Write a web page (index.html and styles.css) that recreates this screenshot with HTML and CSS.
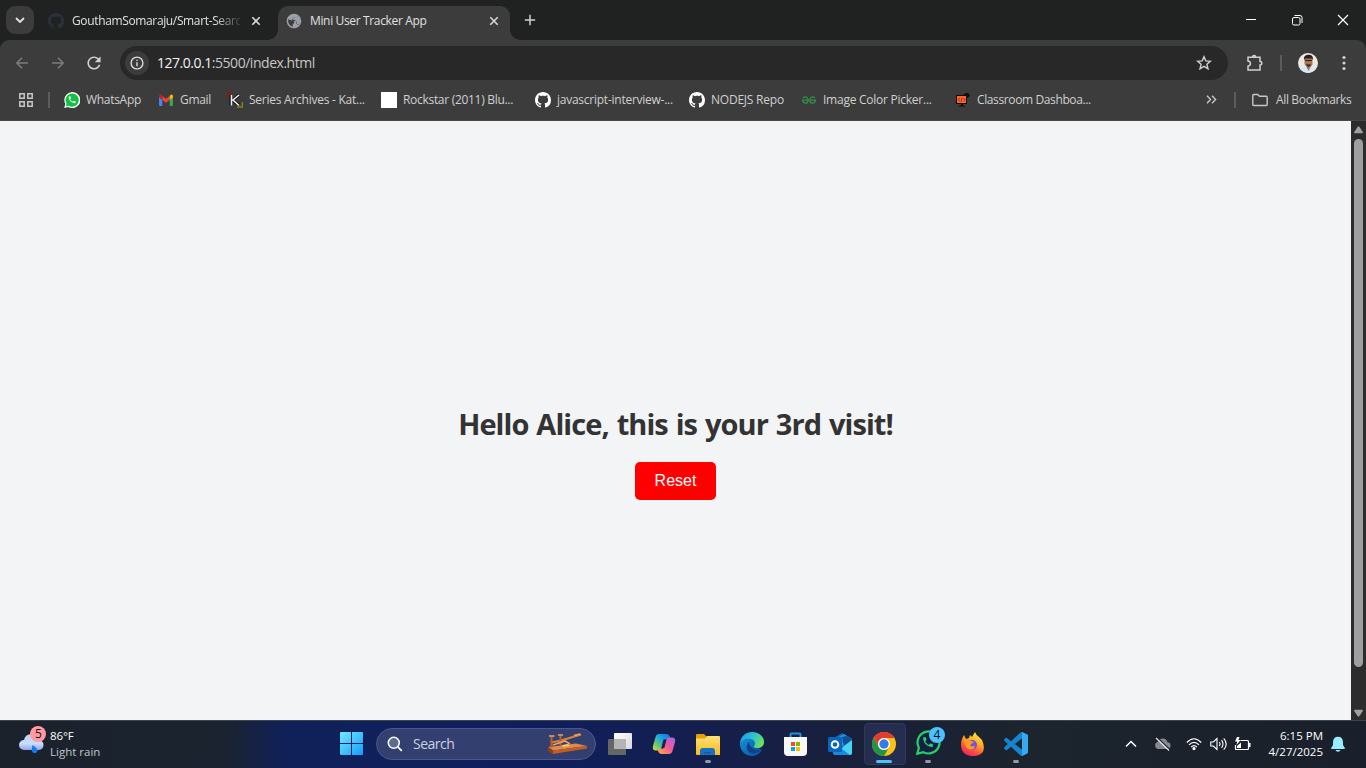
FILE: index.html
```html
<!DOCTYPE html>
<html lang="en">
<head>
<meta charset="utf-8">
<title>Mini User Tracker App</title>
<link rel="stylesheet" href="styles.css">
</head>
<body>
<svg class="defs" width="0" height="0">
  <symbol id="github" viewBox="0 0 16 16"><path fill="currentColor" d="M8 0C3.58 0 0 3.58 0 8c0 3.54 2.29 6.53 5.47 7.59.4.07.55-.17.55-.38 0-.19-.01-.82-.01-1.49-2.01.37-2.53-.49-2.69-.94-.09-.23-.48-.94-.82-1.13-.28-.15-.68-.52-.01-.53.63-.01 1.08.58 1.23.82.72 1.21 1.87.87 2.33.66.07-.52.28-.87.51-1.07-1.78-.2-3.64-.89-3.64-3.95 0-.87.31-1.59.82-2.15-.08-.2-.36-1.02.08-2.12 0 0 .67-.21 2.2.82.64-.18 1.32-.27 2-.27s1.36.09 2 .27c1.53-1.04 2.2-.82 2.2-.82.44 1.1.16 1.92.08 2.12.51.56.82 1.27.82 2.15 0 3.07-1.87 3.75-3.65 3.95.29.25.54.73.54 1.48 0 1.07-.01 1.93-.01 2.2 0 .21.15.46.55.38A8.01 8.01 0 0 0 16 8c0-4.42-3.58-8-8-8z"/></symbol>
  <symbol id="handset" viewBox="0 0 24 24"><path fill="currentColor" d="M6.62 10.79c1.44 2.83 3.76 5.14 6.59 6.59l2.2-2.2c.27-.27.67-.36 1.02-.24 1.12.37 2.33.57 3.57.57.55 0 1 .45 1 1V20c0 .55-.45 1-1 1-9.39 0-17-7.61-17-17 0-.55.45-1 1-1h3.5c.55 0 1 .45 1 1 0 1.25.2 2.45.57 3.57.11.35.03.74-.25 1.02l-2.2 2.2z"/></symbol>
  <symbol id="cross" viewBox="0 0 10 10"><path d="M1.3 1.3l7.400 7.400M8.700 1.300L1.300 8.700" fill="none" stroke="currentColor" stroke-width="1.600"/></symbol>
</svg>

<header class="tabstrip">
  <div class="tab-search"><svg width="10" height="6" viewBox="0 0 10 6"><path d="M1 1l4 4 4-4" fill="none" stroke="#e3e3e3" stroke-width="1.800"/></svg></div>
  <div class="tab tab-idle">
    <svg class="fav dim" width="16" height="16"><use href="#github"/></svg>
    <span class="tab-title fade">GouthamSomaraju/Smart-Searc</span>
    <svg class="close" width="10" height="10"><use href="#cross"/></svg>
  </div>
  <div class="tab tab-active">
    <svg class="fav" width="16" height="16" viewBox="1 1 22 22"><path fill="#9aa0a6" d="M12 2C6.480 2 2 6.480 2 12s4.480 10 10 10 10-4.480 10-10S17.520 2 12 2zm-1 17.930c-3.950-.49-7-3.850-7-7.930 0-.62.080-1.210.210-1.790L9 11.500q3 0 3.500 1.500v2q-2 .5-2 2zm6.900-2.540c-.26-.81-1-1.390-1.900-1.390h-1v-3c0-.55-.45-1-1-1H9.500V9h2c.55 0 1-.45 1-1V6.500h1c1.100 0 1.500-.9 1.500-2v-.0c2.930 1.190 5 4.060 5 7.410 0 2.080-.8 3.970-2.100 5.390z" transform="rotate(4 12 12)"/><path fill="#9aa0a6" d="M14 4l5 3 1.500 5-1.500 4.500-3.500-.5v-3L13.500 11 11 10.500V9l2.500-1.500z"/></svg>
    <span class="tab-title t-mini">Mini User Tracker App</span>
    <svg class="close" width="10" height="10"><use href="#cross"/></svg>
  </div>
  <svg class="new-tab" width="12" height="12" viewBox="0 0 12 12"><path d="M6 .8v10.400M.8 6h10.400" stroke="#d0d0d0" stroke-width="1.500"/></svg>
  <div class="window-controls">
    <svg width="12" height="12" viewBox="0 0 12 12"><path d="M1 5.500h10" stroke="#fff"/></svg>
    <svg width="12" height="12" viewBox="0 0 12 12" fill="none" stroke="#fff"><rect x="1.500" y="3.500" width="7.500" height="7.500" rx="1.500"/><path d="M3.500 1.500h5.500a2 2 0 0 1 2 2v5.500"/></svg>
    <svg width="12" height="12" viewBox="0 0 12 12"><path d="M1 1l10 10M11 1L1 11" stroke="#fff" stroke-width="1.200"/></svg>
  </div>
</header>

<div class="toolbar">
  <svg class="back" width="12" height="12" viewBox="0 0 12 12"><path d="M12 6H1M6 .8L.9 6 6 11.200" fill="none" stroke="#7c7c7c" stroke-width="1.500"/></svg>
  <svg class="forward" width="12" height="12" viewBox="0 0 12 12"><path d="M0 6h11M6 .8L11.100 6 6 11.200" fill="none" stroke="#7c7c7c" stroke-width="1.500"/></svg>
  <svg class="reload" width="14" height="14" viewBox="3.500 3.500 17 17"><path fill="#d0d0d0" d="M17.650 6.350C16.200 4.900 14.210 4 12 4c-4.420 0-7.990 3.580-7.990 8s3.570 8 7.990 8c3.730 0 6.840-2.550 7.730-6h-2.080c-.82 2.330-3.040 4-5.650 4-3.310 0-6-2.690-6-6s2.690-6 6-6c1.660 0 3.140.69 4.220 1.780L13 11h7V4l-2.350 2.350z"/></svg>
  <div class="omnibox">
    <div class="site-info"><svg width="14" height="14" viewBox="0 0 14 14"><circle cx="7" cy="7" r="5.900" fill="none" stroke="#dcdcdc" stroke-width="1.400"/><path d="M7 6.200v4M7 3.700v1.400" stroke="#dcdcdc" stroke-width="1.400"/></svg></div>
    <span class="url"><b>127.0.0.1</b>:5500/index.html</span>
    <svg class="star" width="16" height="16" viewBox="0 0 16 16"><path d="M8 1.700l1.800 4.200 4.600.4-3.500 3 1.100 4.500L8 11.400l-4 2.400 1.100-4.500-3.500-3 4.600-.4z" fill="none" stroke="#d0d0d0" stroke-width="1.400"/></svg>
  </div>
  <svg class="puzzle" width="18" height="18" viewBox="0 0 18 18"><path d="M2 3.200h12v4.300q1.800 0 1.800 1.700t-1.800 1.700V16H2v-3.800q2.400-.4 2.400-2.600T2 7zM6.600 3q0-1.600 1.500-1.600T9.600 3" fill="none" stroke="#d0d0d0" stroke-width="1.500"/></svg>
  <i class="divider d-profile"></i>
  <svg class="avatar" width="20" height="20" viewBox="0 0 20 20"><defs><clipPath id="av"><circle cx="10" cy="10" r="10"/></clipPath></defs><g clip-path="url(#av)"><path fill="#ebe9e6" d="M0 0h20v20H0z"/><path fill="#d7e9f3" d="M1 20q0-5 6-7l3 2 4-2q5 2 5 7z"/><path fill="#a87356" d="M6.500 5h8v6.500l-2 2.500-2 4-2-4-2-3z"/><path fill="#28211e" d="M6 7q-.7-5 4-5.200 5.500-.3 5 5.200l-1-1.600H7zM8.300 11h4.500q-.3 2.800-2.200 2.800T8.300 11z"/><path fill="#9b674d" d="M9.400 11.300h2.400v.7H9.400z"/><path d="M7 7.500h7" stroke="#32221e"/></g></svg>
  <svg class="kebab" width="4" height="16" viewBox="0 0 4 16" fill="#d0d0d0"><circle cx="2" cy="2.500" r="1.600"/><circle cx="2" cy="8" r="1.600"/><circle cx="2" cy="13.500" r="1.600"/></svg>
</div>

<nav class="bookmarks">
  <svg class="apps" width="14" height="14" viewBox="0 0 14 14" fill="none" stroke="#c7c7c7" stroke-width="1.500"><path d="M.8.8h4.400v4.400H.8zM8.800.8h4.400v4.400H8.800zM.8 8.800h4.400v4.400H.8zM8.800 8.800h4.400v4.400H8.800z"/></svg>
  <i class="divider d-apps"></i>
  <a class="bm w94"><svg width="16" height="16" viewBox="0 0 16 16"><path fill="#fff" d="M.2 16l1.100-4.100A8 8 0 1 1 4.300 15z"/><path fill="#12c143" d="M1.800 14.500l.8-2.800a6.600 6.600 0 1 1 2.200 2.100z"/><use href="#handset" x="3.600" y="3.300" width="9" height="9" color="#fff"/></svg><span class="t-wa">WhatsApp</span></a>
  <a class="bm w69"><svg width="16" height="16" viewBox="0 0 16 16"><path fill="#4285f4" d="M1 5l3.300 2.500V14H2q-1 0-1-1z"/><path fill="#34a853" d="M11.700 7.500L15 5v8q0 1-1 1h-2.300z"/><path fill="#ea4335" d="M4.300 4L8 6.800 11.700 4v4L8 10.800 4.300 8z"/><path fill="#c5221f" d="M1 4.300q0-1.800 1.500-1.700Q3.500 2.700 4.300 4v4L1 5.400z"/><path fill="#fbbc04" d="M15 4.300q0-1.800-1.500-1.700-1 .1-1.800 1.400v4L15 5.400z"/></svg><span class="t-gm">Gmail</span></a>
  <a class="bm w154"><svg width="16" height="16" viewBox="0 0 16 16" fill="none"><path d="M1 6V1h5" stroke="#9c1010" stroke-width="1.300"/><path d="M15.300 10v5H10" stroke="#8a8514" stroke-width="1.300"/><path d="M4 3v10.500M12 3L5.500 8.500 12.500 13" stroke="#111" stroke-width="3"/><path d="M4.500 3v10.500M12 3L6 8l6 5.500" stroke="#eee" stroke-width="1.600"/></svg><span class="t-se">Series Archives - Kat...</span></a>
  <a class="bm w154"><svg width="16" height="16"><rect width="16" height="16" fill="#fff"/></svg><span class="t-ro">Rockstar (2011) Blu...</span></a>
  <a class="bm w154"><svg width="16" height="16" color="#fff"><use href="#github"/></svg><span class="t-js">javascript-interview-...</span></a>
  <a class="bm w112"><svg width="16" height="16" color="#fff"><use href="#github"/></svg><span class="t-no">NODEJS Repo</span></a>
  <a class="bm w154"><svg width="16" height="16" viewBox="0 0 16 16" fill="none" stroke="#2f8d46" stroke-width="1.300"><path d="M1 8.200h14M2 5.800q1.500-1.200 3.500-.6 1.600.8 1.600 3 0 3-2.500 3T1.600 8.200M14 5.800q-1.500-1.200-3.500-.6-1.600.8-1.600 3 0 3 2.500 3t3-3"/></svg><span class="t-im">Image Color Picker...</span></a>
  <a class="bm"><svg width="16" height="16" viewBox="0 0 16 16"><path fill="#101010" d="M1 3h7q2-2.500 5-2l2 2-1 2-2 1v6H8v1.500h2v1H4v-1h2V12H1z"/><path fill="#ff6230" d="M2 4h9v7H2z"/><path d="M4.800 6L3.200 7.700l1.600 1.700M8.300 6l1.600 1.700-1.600 1.700M7 5.700L6 9.800" stroke="#7c2c10" stroke-width=".8" fill="none"/></svg><span class="t-cl">Classroom Dashboa...</span></a>
  <div class="bm-right">
    <svg class="more" width="11" height="9" viewBox="0 0 11 9"><path d="M1 .8l3.600 3.700L1 8.200M6 .8l3.600 3.700L6 8.200" fill="none" stroke="#c7c7c7" stroke-width="1.400"/></svg>
    <i class="divider"></i>
    <svg class="folder" width="16" height="14" viewBox="0 0 16 14"><path d="M.8 11.500v-9q0-1 1-1h4l1.700 1.700h6.700q1 0 1 1v7.300q0 1-1 1H1.800q-1 0-1-1z" fill="none" stroke="#c7c7c7" stroke-width="1.400"/></svg>
    <span class="t-all">All Bookmarks</span>
  </div>
</nav>

<div class="viewport">
  <main class="page">
    <h1 class="greeting">Hello Alice, this is your 3rd visit!</h1>
    <button class="reset">Reset</button>
  </main>
  <div class="scrollbar">
    <svg width="9" height="8" viewBox="0 0 9 8"><path fill="#9f9f9f" d="M3.700.8q.8-.9 1.600 0L8.800 6q.5 1.200-.8 1.200H1Q-.3 7.200.2 6z"/></svg>
    <div class="thumb"></div>
    <svg width="9" height="8" viewBox="0 0 9 8"><path fill="#9f9f9f" d="M3.700 7.200q.8.900 1.600 0L8.800 2q.5-1.200-.8-1.200H1Q-.3.800.2 2z"/></svg>
  </div>
</div>

<footer class="taskbar">
  <div class="weather">
    <svg width="28" height="32" viewBox="0 0 28 32"><defs><linearGradient id="cloud" x2="0" y2="1"><stop stop-color="#b9d6fb"/><stop offset=".6" stop-color="#cbdcf8"/><stop offset="1" stop-color="#8ba8ea"/></linearGradient></defs><path fill="url(#cloud)" d="M6 24a5 5 0 0 1 0-10q1-6 8-6 6 0 7 6a5 5 0 0 1-1 10z"/><path fill="#1a78ee" d="M14.500 19q5 3 5 6a2.900 2.900 0 0 1-5.600 0q-.3-3 .6-6z"/><circle cx="20" cy="8" r="8" fill="#ff99a4"/><text class="badge-text" x="20.500" y="12" text-anchor="middle">5</text></svg>
    <div class="weather-text"><span class="temp">86°F</span><span class="rain">Light rain</span></div>
  </div>
  <svg class="start" width="23" height="23" viewBox="0 0 23 23"><defs><linearGradient id="win" x2="1" y2="1"><stop stop-color="#73eaff"/><stop offset="1" stop-color="#139df8"/></linearGradient></defs><path fill="url(#win)" d="M0 1q0-1 1-1h10v11H0zM12 0h10q1 0 1 1v10H12zM0 12h11v11H1q-1 0-1-1zM12 12h11v10q0 1-1 1H12z"/></svg>
  <div class="search">
    <svg width="16" height="16" viewBox="0 0 16 16" fill="none"><circle cx="6.800" cy="6.800" r="5.500" fill="#606b92" stroke="#fff" stroke-width="1.500"/><path d="M10.800 10.800l4 4" stroke="#fff" stroke-width="1.800"/></svg>
    <span class="search-label">Search</span>
    <svg class="key" width="40" height="22" viewBox="0 0 40 22"><path fill="#e08a4a" d="M0 14l28-3.500L39 13 5 17.500z"/><path fill="#c05e26" d="M5 17.500L39 13v2.500L5 21z"/><path fill="#8d3f16" d="M0 14l5 3.500V21l-5-2.500z"/><path d="M3 9.500l10-2L33 1.500" fill="none" stroke="#d98040" stroke-width="2"/><path d="M3.500 3.500v11M12.500 3v9" stroke="#b5602a" stroke-width="2.200"/><path d="M1 3h5.500M10 2h5M26 2.500l6-1.500M5 12l12-4 5 3" stroke="#f0a15d" stroke-width="1.600" fill="none"/><path fill="#f0c96e" d="M14 12l6-1 2 2-7 1z"/></svg>
  </div>
  <div class="apps-row">
    <div class="app"><svg width="24" height="24" viewBox="0 0 24 24"><defs><linearGradient id="tv" x2="1" y2="1"><stop stop-color="#fff"/><stop offset="1" stop-color="#d8d8d8"/></linearGradient></defs><rect x="6" y="1" width="18" height="16" rx="1" fill="url(#tv)"/><rect y="7" width="18" height="16" rx="1" fill="#666"/><path fill="#b4b4b4" d="M6 7h12v10H6z"/></svg></div>
    <div class="app"><svg width="24" height="24" viewBox="0 0 24 24"><defs><linearGradient id="c1" x1="1" x2="0" y2="1"><stop stop-color="#2165d9"/><stop offset=".4" stop-color="#16a7e5"/><stop offset=".7" stop-color="#68c76b"/><stop offset="1" stop-color="#e3db35"/></linearGradient><linearGradient id="c2" x1="1" x2="0" y2="1"><stop stop-color="#aa62ea"/><stop offset=".5" stop-color="#f55b92"/><stop offset="1" stop-color="#ffb341"/></linearGradient></defs><path fill="url(#c1)" d="M6.500 2h8.500q2 0 3 3l.8 2H15q-2.500 0-3.200 2.500L10 16q-1 2.500-3.500 2.500H4Q0 18.500 1 14L3.500 5q.8-3 3-3z"/><path fill="url(#c2)" d="M17.500 22H9q-2 0-3-3l-.8-2H9q2.500 0 3.200-2.500L14 8q1-2.500 3.500-2.500H20q4 0 3 4.500L20.500 19q-.8 3-3 3z"/><path fill="#152058" d="M11.500 7.500h3L12.300 16h-3z"/></svg></div>
    <div class="app"><svg width="24" height="24" viewBox="0 0 24 24"><defs><linearGradient id="fo" x2="0" y2="1"><stop stop-color="#ffe078"/><stop offset="1" stop-color="#fcb91b"/></linearGradient></defs><path fill="#e3a008" d="M0 3q0-1 1-1h7l3 3v5H0z"/><path fill="url(#fo)" d="M0 6.500h9L11 4h12q1 0 1 1v18H1q-1 0-1-1z"/><path fill="#1473c4" d="M4 23v-4q0-3 3-3h9q3 0 3 3v4z"/><path fill="#1d5a94" d="M8 20h7v1.500H8z"/></svg><i class="run-dot"></i></div>
    <div class="app"><svg width="24" height="24" viewBox="0 0 24 24"><defs><linearGradient id="ed" y1=".2" x2="1" y2=".6"><stop stop-color="#1c9be5"/><stop offset=".5" stop-color="#2fc2d0"/><stop offset="1" stop-color="#6ae35b"/></linearGradient><linearGradient id="ed2" x2="1" y2="1"><stop stop-color="#1493dc"/><stop offset="1" stop-color="#0b4c9b"/></linearGradient></defs><path fill="url(#ed2)" d="M0 12Q0 7 6 6h9v9l7 3q-4 6-10 6A12 12 0 0 1 0 12z"/><path fill="url(#ed)" d="M0 12C0 5 5 0 12 0c7 0 12 4.500 12 10 0 4-3 6-6.500 6-3 0-4-1-3.500-2 2-2 1-6-3-7C6 6 1 8 0 12z"/><path fill="#104184" d="M9 10q-4 4-1 9 4 5 14-1-4 1-8-1-5-3-5-7z"/></svg></div>
    <div class="app"><svg width="24" height="24" viewBox="0 0 24 24"><path d="M6.500 6V2.500q0-1 1-1h8q1 0 1 1V6" fill="none" stroke="#1994e5" stroke-width="2"/><path fill="#f8f8f8" d="M0 5h23v15q0 4-4 4H4q-4 0-4-4z"/><path fill="#f25022" d="M7 10h4v4H7z"/><path fill="#7fba00" d="M12 10h4v4h-4z"/><path fill="#00a4ef" d="M7 15h4v4H7z"/><path fill="#ffb900" d="M12 15h4v4h-4z"/></svg></div>
    <div class="app"><svg width="24" height="24" viewBox="0 0 24 24"><path fill="#1264a8" d="M4 7l10-6 10 6v14q0 2-2 2H6z"/><path fill="#248ee4" d="M10 5l6-3 8 5-8 7H10z"/><path fill="#0f4f92" d="M14 5l5-1 5 3.500-8 6.500z"/><path fill="#48d5f5" d="M24 8v13q0 2-2 2H8l8-9z"/><path fill="#168dd9" d="M5 15l9 2 8 6H7q-2 0-2-2z"/><rect y="5" width="14" height="15" rx="1.500" fill="#0965be"/><circle cx="7" cy="12.500" r="3.300" fill="none" stroke="#fff" stroke-width="2"/></svg></div>
    <div class="app app-active"><svg width="24" height="24" viewBox="0 0 24 24"><circle cx="12" cy="12" r="12" fill="#fbc116"/><path fill="#e33b2e" d="M1.600 6A12 12 0 0 1 22.400 6H12a6 6 0 0 0-5.200 9z"/><path fill="#229342" d="M1.600 6a12 12 0 0 0 10.400 18l5.200-9a6 6 0 0 1-10.400 0z"/><circle cx="12" cy="12" r="6" fill="#fff"/><circle cx="12" cy="12" r="4.700" fill="#347de8"/></svg><i class="run-bar"></i></div>
    <div class="app app-chat"><svg width="34" height="28" viewBox="-5 0 34 28"><path d="M1.300 26.700l1.600-6a11 11 0 1 1 4.400 4.400z" fill="#152044" stroke="#25d366" stroke-width="2.200"/><use href="#handset" x="5.500" y="8.500" width="13" height="13" color="#25d366"/><circle cx="21" cy="8" r="8" fill="#4cc2ff"/><text class="badge-text" x="21" y="12" text-anchor="middle">4</text></svg><i class="run-dot"></i></div>
    <div class="app"><svg width="24" height="24" viewBox="0 0 24 24"><defs><linearGradient id="ff" x1=".8" x2=".3" y2="1"><stop stop-color="#fff04a"/><stop offset=".4" stop-color="#ffae20"/><stop offset=".75" stop-color="#ff4b3c"/><stop offset="1" stop-color="#e72270"/></linearGradient></defs><path fill="url(#ff)" d="M3 5l1-2 2 4 3-1 1-3 2 2 3-5q1 3 4 5l3 3q6 14-7 16Q2 25 1 14q0-6 2-9z"/><circle cx="12" cy="13" r="5" fill="#7651df"/><path fill="#ff9a22" d="M4 8q5-2 7 1l3 1-3 2q-1.500 2 1 2.500l3-.5q-1 4-5 3.500-5-.5-6-9.500z"/></svg></div>
    <div class="app"><svg width="24" height="24" viewBox="0 0 24 24"><path fill="#1784cf" d="M23.150 2.587L18.210.21a1.494 1.494 0 0 0-1.705.29l-9.460 8.630-4.120-3.128a.999.999 0 0 0-1.276.057L.327 7.261A1 1 0 0 0 .326 8.740L3.899 12 .326 15.260a1 1 0 0 0 .001 1.479L1.650 17.940a.999.999 0 0 0 1.276.057l4.120-3.128 9.460 8.630a1.492 1.492 0 0 0 1.704.290l4.942-2.377A1.500 1.500 0 0 0 24 20.060V3.939a1.500 1.500 0 0 0-.850-1.352zm-5.146 14.861L10.826 12l7.178-5.448v10.896z"/><path fill="#35aaf0" d="M18 .1l5.150 2.487q.85.400.85 1.352v16.121q0 1-.85 1.352L18 23.900z"/></svg><i class="run-dot"></i></div>
  </div>
  <div class="tray">
    <svg class="chev" width="12" height="8" viewBox="0 0 12 8"><path d="M1 6.500l5-5 5 5" fill="none" stroke="#fff" stroke-width="1.500"/></svg>
    <svg class="onedrive" width="17" height="14" viewBox="0 0 17 14"><path fill="#858890" d="M4 12a3.700 3.700 0 0 1 0-7.200Q5 1.500 9 1.500q3.500 0 4.500 3.700 3 0 3 3.300T13 12z"/><path d="M3.200.6l13 12.500" stroke="#202630" stroke-width="1.400"/><path d="M2 1l13 12.500" stroke="#e8e8e8" stroke-width="1.200"/></svg>
    <svg class="wifi" width="16" height="14" viewBox="0 0 16 14" fill="none" stroke="#fff" stroke-width="1.200"><path d="M.8 5.500q7.200-7.500 14.400 0M3 7.800q5-5 10 0M5.200 10q2.800-2.800 5.600 0"/><circle cx="8" cy="11.600" r="1" fill="#fff"/></svg>
    <svg class="volume" width="17" height="14" viewBox="0 0 17 14" fill="none" stroke="#fff" stroke-width="1.100"><path d="M.8 5h2.500L7 1.500v11L3.300 9H.8zM9.300 5q1.500 2 0 4M11.500 3.200q3 3.800 0 7.600M13.700 1.300q5 5.700 0 11.400"/></svg>
    <svg class="battery" width="17" height="14" viewBox="0 0 17 14"><path d="M6.500 3.500h7q1 0 1 1v7q0 1-1 1H2.500q-1 0-1-1V8" fill="none" stroke="#fff" stroke-width="1.200"/><path fill="#fff" d="M15 6h1.500v4H15zM3 9l4-3.500V11H3zM3 0h2.500l-1 3h2L2.500 8l.7-3.500H1z"/></svg>
    <div class="clock"><span class="time">6:15 PM</span><span class="date">4/27/2025</span></div>
    <svg class="bell" width="14" height="16" viewBox="0 0 14 16"><path fill="#99ebff" d="M2 6.500Q2 .8 7 .8t5 5.700V9l2 3.300q0 .7-1 .7H1q-1 0-1-.7L2 9zM4.500 14h5Q9 15.800 7 15.800T4.500 14z"/></svg>
  </div>
</footer>
</body>
</html>
```

FILE: styles.css
```css
* { box-sizing: border-box; }
body { margin: 0; width: 1366px; height: 768px; overflow: hidden; display: flex; flex-direction: column; font: 12px/16px "Open Sans", "Noto Sans", sans-serif; color: #d6d6d6; background: #1f2221; }
svg { display: block; flex: none; }
.defs { position: absolute; }
span { white-space: nowrap; }

.tabstrip { height: 40px; flex: none; display: flex; align-items: center; background: #1f2221; }
.tab-search { width: 28px; height: 28px; margin-left: 6px; border-radius: 9px; background: #3c3c3c; display: grid; place-items: center; }
.tab { display: flex; align-items: center; height: 34px; align-self: flex-end; color: #e0e0e0; padding-bottom: 5px; }
.tab-idle { margin-left: 14px; width: 230px; }
.fav { margin-right: 8px; }
.dim { color: #2a313a; }
.tab-title { width: 168px; padding-top: 1px; letter-spacing: -.35px; }
.fade { letter-spacing: -.36px; -webkit-mask-image: linear-gradient(90deg, #000 142px, transparent 172px); mask-image: linear-gradient(90deg, #000 142px, transparent 172px); }
.close { margin-left: 11px; color: #d8d8d8; }
.tab-active { position: relative; width: 232px; padding-left: 8px; border-radius: 10px 10px 0 0; background: #3c3c3c; }
.tab-active::before, .tab-active::after { content: ""; position: absolute; bottom: 0; width: 10px; height: 10px; }
.tab-active::before { left: -10px; background: radial-gradient(circle at 0 0, transparent 9.500px, #3c3c3c 10px); }
.tab-active::after { right: -10px; background: radial-gradient(circle at 100% 0, transparent 9.500px, #3c3c3c 10px); }
.new-tab { margin-left: 14px; }
.window-controls { margin-left: auto; margin-right: 17px; display: flex; gap: 34px; }

.toolbar { height: 46px; flex: none; display: flex; align-items: center; background: #3c3c3c; border-radius: 9px 9px 0 0; }
.back { margin-left: 16px; }
.forward { margin-left: 24px; }
.reload { margin-left: 23px; }
.omnibox { margin-left: 19px; width: 1108px; height: 34px; border-radius: 17px; background: #282828; display: flex; align-items: center; padding-left: 5px; }
.site-info { width: 24px; height: 24px; border-radius: 12px; background: #3c3c3c; display: grid; place-items: center; }
.url { margin-left: 8px; font-size: 14px; letter-spacing: -.47px; color: #c7c7c7; }
.url b { font-weight: 400; color: #f2f2f2; }
.star { margin-left: auto; margin-right: 16px; }
.puzzle { margin-left: 18px; }
.divider { width: 2px; height: 16px; background: #5c5c5c; flex: none; }
.d-profile { margin-left: 16px; }
.avatar { margin-left: 16px; }
.kebab { margin-left: 24px; }

.bookmarks { height: 35px; flex: none; display: flex; align-items: center; padding-bottom: 7px; background: #3c3c3c; border-bottom: 1px solid #474747; color: #d0d0d0; }
.apps { margin-left: 19px; }
.d-apps { margin: 0 14px 0 15px; }
.bm { display: flex; align-items: center; gap: 6px; flex: none; }
.bm span { letter-spacing: -.3px; }
.bm .t-se, .bm .t-js, .bm .t-im { letter-spacing: -.25px; }
.bm .t-cl { letter-spacing: -.38px; }
.bm .t-no { letter-spacing: -.22px; }
.w94 { width: 94px; }
.w69 { width: 69px; }
.w112 { width: 112px; }
.w154 { width: 154px; }
.bm-right { margin-left: auto; width: 160px; display: flex; align-items: center; }
.more { margin-right: 17px; }
.folder { margin: 0 8px 0 16px; }
.t-all { letter-spacing: -.35px; }

.viewport { height: 599px; flex: none; display: flex; background: #f2f4f6; }
.page { width: 1351px; display: flex; flex-direction: column; align-items: center; padding-top: 283px; }
.greeting { margin: 0 0 18px; font-size: 29px; line-height: 40px; font-weight: 700; letter-spacing: -.92px; word-spacing: 1.200px; color: #333; white-space: nowrap; }
.reset { width: 81px; height: 38px; padding: 0; border: 0; border-radius: 5px; background: #f00; color: #fff; font: 16px "Liberation Sans", Arial, sans-serif; }
.scrollbar { width: 15px; background: #2c2c2c; display: flex; flex-direction: column; align-items: center; padding-top: 5px; }
.thumb { width: 9px; height: 528px; margin: 5px 0 42px; border-radius: 5px; background: #9f9f9f; }

.taskbar { height: 48px; flex: none; display: flex; align-items: center; border-top: 1px solid #3b4550; padding-bottom: 2px; background: linear-gradient(90deg, #1c222c 0, #1a232f 225px, #10215a 285px, #101f5c 560px, #151f4b 720px, #1a2037 880px, #1c242d 1030px, #1a202b 1366px); }
.weather { width: 339px; padding-left: 18px; display: flex; align-items: center; gap: 4px; }
.weather svg { margin-bottom: 3px; }
.badge-text { font: 12px "Open Sans", sans-serif; fill: #111; }
.weather-text { display: flex; flex-direction: column; font-size: 11.500px; color: #c1c5ca; }
.temp { color: #fff; letter-spacing: -.1px; }
.start { margin-left: 1px; }
.search { width: 220px; height: 32px; margin-left: 13px; border: 1px solid #4b568c; border-radius: 16px; background: #33406f; display: flex; align-items: center; padding: 0 7px 0 10px; }
.search-label { margin-left: 10px; font-size: 14px; letter-spacing: -.5px; color: #ccd1e0; }
.key { margin-left: auto; }
.apps-row { display: flex; margin-left: 2px; }
.app { position: relative; width: 44px; height: 45px; display: grid; place-items: center; }
.app-active::before { content: ""; position: absolute; left: 2px; top: 2px; width: 40px; height: 40px; border: 1px solid #303956; border-radius: 4px; background: #252e50; }
.app-active svg { position: relative; }
.app-chat svg { margin-bottom: 5px; }
.run-dot, .run-bar { position: absolute; left: 19px; bottom: 3px; width: 6px; height: 3px; border-radius: 2px; background: #9499a6; }
.run-bar { left: 14px; width: 16px; background: #4cc2ff; }
.tray { flex: 1; display: flex; align-items: center; }
.chev { margin-left: 87px; }
.onedrive { margin-left: 17px; }
.wifi { margin-left: 15px; }
.volume { margin-left: 8px; }
.battery { margin-left: 7px; }
.clock { width: 72px; display: flex; flex-direction: column; align-items: flex-end; font-size: 11.500px; color: #fff; letter-spacing: 0; }
.bell { margin-left: 8px; }
```
